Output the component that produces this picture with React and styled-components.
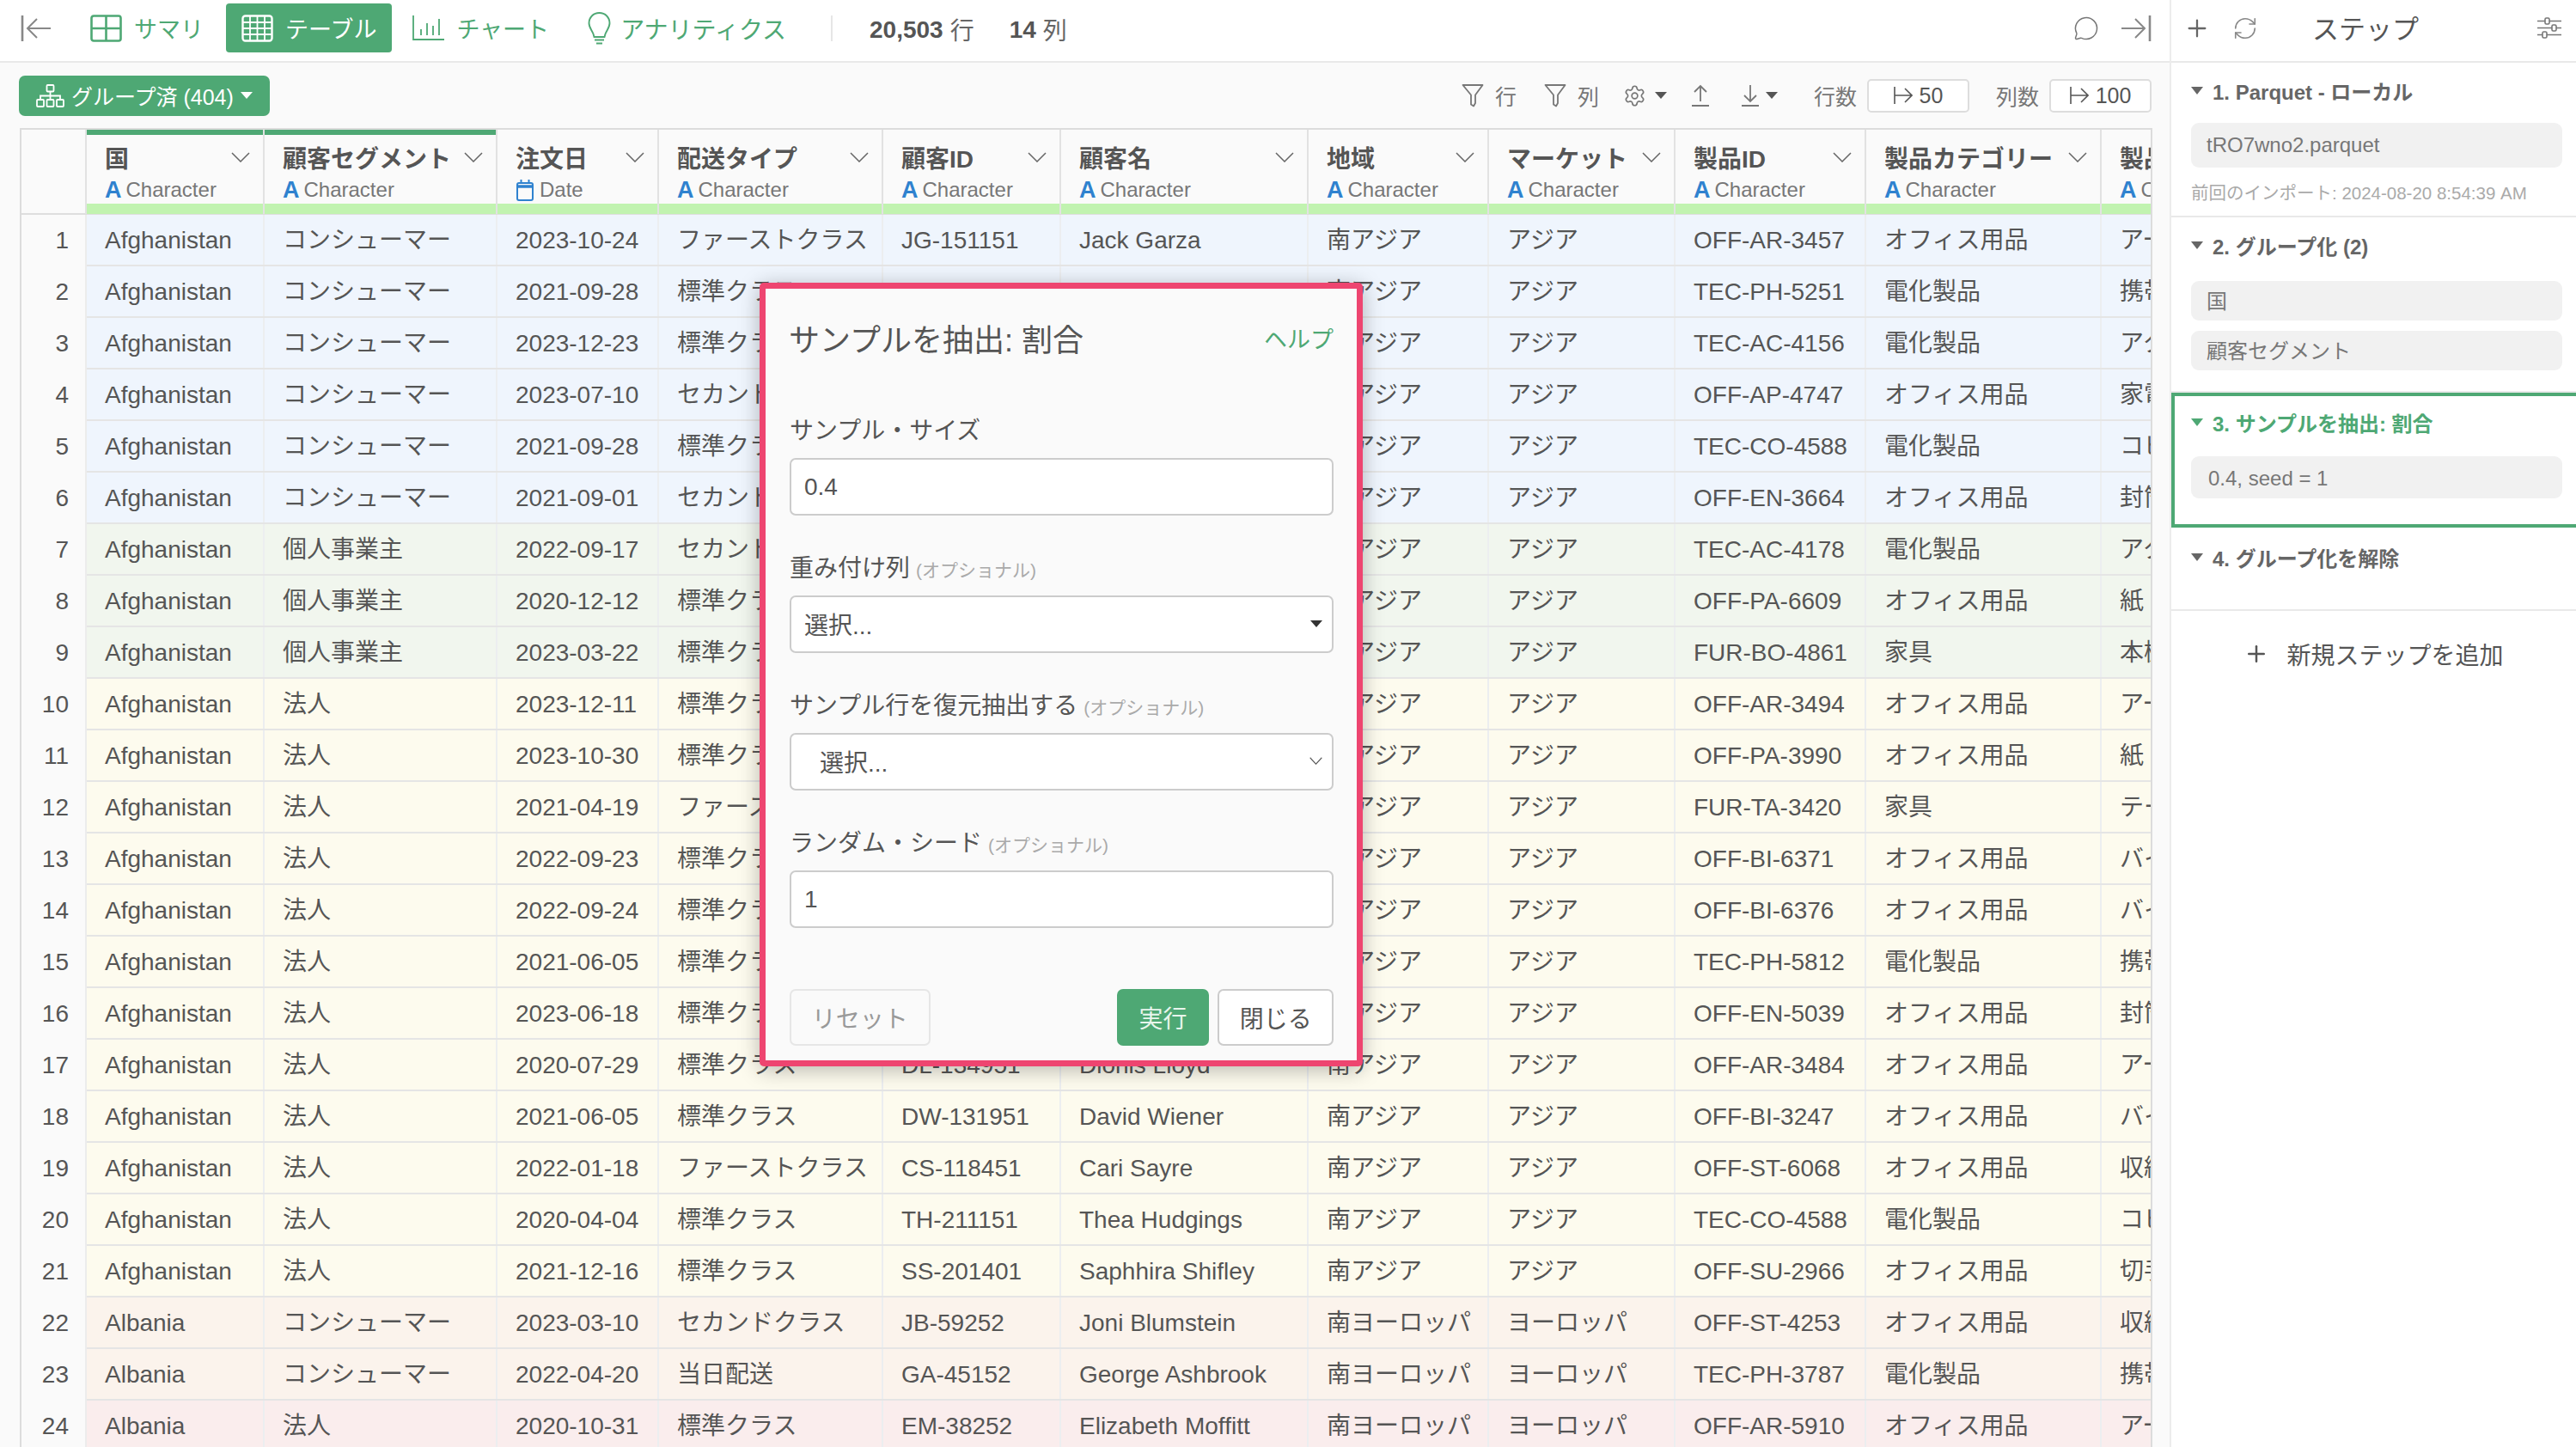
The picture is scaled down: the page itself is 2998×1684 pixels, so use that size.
import React from 'react';
import styled, { createGlobalStyle } from 'styled-components';
import { MessageCircle, RefreshCw, Settings, Plus } from 'lucide-react';

const GREEN = '#4ea874';
const FONT = `"Liberation Sans", "Noto Sans CJK JP", sans-serif`;

const Global = createGlobalStyle`
  html, body { margin: 0; padding: 0; background: #fff; overflow: hidden; }
  body { font-family: ${FONT}; color: #555; }
  * { box-sizing: border-box; }
`;

const Page = styled.div`display: flex; width: 2998px; height: 1684px; overflow: hidden;`;
const Main = styled.main`position: relative; width: 2525px; flex: none; background: #fafafa; display: flex; flex-direction: column;`;
const TopBar = styled.header`
  height: 73px; flex: none; display: flex; align-items: center; background: #fff;
  border-bottom: 2px solid #e9e9e9; padding: 0 21px 6px 24px;
`;
const Tabs = styled.nav`display: flex; align-items: center; margin-left: 27px;`;
const Tab = styled.div`
  height: 57px; display: flex; align-items: center; gap: ${p => p.$gap || 14}px; padding: 0 18px; border-radius: 4px;
  font-size: ${p => p.$fs || 27}px; margin-left: ${p => p.$ml || 0}px;
  color: ${p => (p.$active ? '#fff' : GREEN)};
  background: ${p => (p.$active ? GREEN : 'transparent')};
`;
const Divider = styled.span`width: 2px; height: 30px; background: #e6e6e6; margin-left: 34px;`;
const Stat = styled.span`font-size: 28px; color: #666; margin-left: ${p => p.$ml}px; margin-top: 2px; display: inline-flex; align-items: center; gap: 8px;`;
const StatNum = styled.b`color: #555; line-height: 34px; padding-top: 2px;`;
const TopRight = styled.div`margin-left: auto; display: flex; align-items: center; gap: 25px;`;

const Toolbar = styled.div`height: 76px; flex: none; display: flex; align-items: center; padding: 0 21px 0 22px;`;
const GroupButton = styled.div`
  width: 292px; height: 47px; background: ${GREEN}; border-radius: 7px; color: #fff; font-size: 25px;
  display: flex; align-items: center; padding-left: 20px; gap: 8px; white-space: nowrap;
`;
const ToolRight = styled.div`margin-left: auto; display: flex; align-items: center; color: #777; font-size: 25px;`;
const ToolItem = styled.div`display: flex; align-items: center; gap: ${p => p.$gap || 12}px; margin-left: ${p => p.$ml || 0}px;`;
const Caret = styled.i`
  display: inline-block; width: 0; height: 0; flex: none;
  border-left: ${p => p.$w / 2}px solid transparent; border-right: ${p => p.$w / 2}px solid transparent;
  border-top: ${p => p.$h}px solid ${p => p.$c || '#555'};
`;
const CountBox = styled.div`
  width: 119px; height: 39px; background: #fff; border: 2px solid #ddd; border-radius: 5px;
  display: flex; align-items: center; justify-content: center; gap: 8px; font-size: 25px; color: #555;
`;

const TableWrap = styled.div`width: 2482px; margin-left: 23px; flex: 1; overflow: hidden; border: 2px solid #dcdcdc; border-bottom: 0; background: #fff;`;
const COLS = '76px 207px 271px 188px 261px 207px 288px 210px 217px 222px 274px 220px';
const HeadRow = styled.div`display: grid; grid-template-columns: ${COLS}; height: 99px; border-bottom: 2px solid #dedede; background: #fafafa;`;
const NumHead = styled.div`border-right: 2px solid #e2e2e2;`;
const HeadCell = styled.div`display: flex; flex-direction: column; border-right: 2px solid #e2e2e2; min-width: 0;`;
const GroupBar = styled.div`height: 6px; flex: none; background: ${p => (p.$on ? GREEN : 'transparent')};`;
const HeadBody = styled.div`flex: 1; padding: 9px 15px 0 21px; min-width: 0;`;
const Strip = styled.div`height: 12px; flex: none; background: #c1f3b0;`;
const TitleLine = styled.div`display: flex; justify-content: space-between; align-items: center; height: 34px; font-size: 28px; font-weight: 700; color: #555; white-space: nowrap;`;
const TypeLine = styled.div`display: flex; align-items: center; gap: 5px; height: 32px; margin-top: 5px; font-size: 24px; color: #777; white-space: nowrap;`;
const TypeA = styled.b`font-size: 27px; color: #2f82cf;`;
const DateIconWrap = styled.span`display: inline-flex; margin-left: 1px; margin-right: 2px;`;

const Row = styled.div`display: grid; grid-template-columns: ${COLS}; height: 60px; border-bottom: 2px solid #e5e5e5; background: ${p => p.$bg};`;
const NumCell = styled.div`background: #fafafa; border-right: 2px solid #ececec; font-size: 28px; color: #555; line-height: 60px; text-align: right; padding-right: 19px;`;
const Cell = styled.div`border-right: 2px solid #eceef0; font-size: 28px; color: #555; line-height: 60px; height: 58px; padding-left: 21px; white-space: nowrap; overflow: hidden;`;

const Modal = styled.section`
  position: absolute; left: 884px; top: 329px; width: 702px; height: 912px; background: #fafafa;
  border: 7px solid #ee4570; border-radius: 5px; box-shadow: 0 4px 24px rgba(0,0,0,.28);
  padding: 32px 27px 0 28px; display: flex; flex-direction: column;
`;
const ModalHead = styled.div`display: flex; justify-content: space-between; align-items: center; height: 50px;`;
const ModalTitle = styled.h2`margin: 0 0 0 -1px; font-size: 36px; font-weight: 400; color: #555;`;
const HelpLink = styled.a`font-size: 27px; color: ${GREEN};`;
const Field = styled.div`margin-top: ${p => p.$mt || 41}px;`;
const Label = styled.label`display: block; height: 40px; line-height: 42px; font-size: 28px; color: #555; margin-bottom: 12px; white-space: nowrap;`;
const Optional = styled.span`font-size: 21px; color: #aaa; margin-left: 7px;`;
const TextInput = styled.input`
  display: block; width: 100%; height: 67px; border: 2px solid #ccc; border-radius: 7px; background: #fff;
  font: 28px ${FONT}; color: #555; padding: 0 15px; outline: none;
`;
const SelectBox = styled.div`
  display: flex; align-items: center; justify-content: space-between; width: 100%; height: 67px; border: 2px solid #ccc;
  border-radius: 7px; background: #fff; font-size: 28px; color: #555; padding: 0 11px 2px ${p => p.$pl}px;
`;
const ButtonRow = styled.div`display: flex; align-items: center; margin-top: 71px; gap: 10px;`;
const Btn = styled.div`
  height: 66px; width: ${p => p.$w}px; display: flex; align-items: center; justify-content: center; font-size: 28px; border-radius: 7px;
  margin-right: ${p => p.$mr || 0}px;
  color: ${p => p.$c}; background: ${p => p.$bg}; border: 2px solid ${p => p.$bd};
`;

const Side = styled.aside`width: 473px; flex: none; background: #fff; border-left: 2px solid #ececec; display: flex; flex-direction: column;`;
const SideHead = styled.div`height: 73px; flex: none; display: flex; align-items: center; border-bottom: 2px solid #e9e9e9; padding: 0 17px 6px 14px; color: #666;`;
const SideTitle = styled.div`font-size: 31px; color: #555; margin-left: 63px; margin-top: -2px;`;
const Spacer = styled.span`flex: 1;`;
const Step = styled.div`border-bottom: 2px solid #e9e9e9; padding: ${p => p.$pt}px 16px ${p => p.$pb}px 23px;`;
const ActiveStep = styled.div`border: 4px solid ${GREEN}; border-right: 0; padding: 17px 16px 30px 19px;`;
const StepTitle = styled.div`
  display: flex; align-items: center; gap: 11px; height: 30px; padding-bottom: 4px; font-size: 24px; font-weight: 700; white-space: nowrap;
  color: ${p => (p.$on ? GREEN : '#666')};
`;
const StepCard = styled.div`
  height: ${p => p.$h}px; margin-top: ${p => p.$mt}px; background: #f1f1f1; border-radius: 9px;
  padding: ${p => p.$tp || 0}px 0 ${p => p.$bp || 0}px ${p => p.$pl || 18}px;
  font-size: 24px; color: #777; display: flex; align-items: center;
`;
const StepMeta = styled.div`height: 24px; line-height: 24px; margin-top: 18px; font-size: 20.5px; color: #aaa; white-space: nowrap;`;
const AddStep = styled.div`height: 103px; display: flex; align-items: center; justify-content: center; gap: 20px; font-size: 28px; color: #555; padding-bottom: 3px;`;

const Svg = styled.svg`display: block; flex: none; transform: ${p => (p.$flip ? 'scaleX(-1)' : 'none')};`;

const BackIcon = ({ flip }) => (
  <Svg $flip={flip} width="36" height="30" viewBox="0 0 36 30" fill="none" stroke="#888" strokeWidth="2">
    <path d="M2 0v30" strokeWidth="2.6" /><path d="M35 15H8M19 4 8 15l11 11" />
  </Svg>
);
const GridIcon = () => (
  <Svg width="37" height="32" viewBox="0 0 37 32" fill="none" stroke={GREEN} strokeWidth="2.6">
    <rect x="1.5" y="1.5" width="34" height="29" rx="2.5" /><path d="M18.5 1.5v29M1.5 16h34" />
  </Svg>
);
const TableIcon = () => (
  <Svg width="37" height="32" viewBox="0 0 37 32" fill="none" stroke="#fff" strokeWidth="2.4">
    <rect x="1.5" y="1.5" width="34" height="29" rx="3" />
    <path d="M10 1.5v29M18.5 1.5v29M27 1.5v29M1.5 9h34M1.5 16h34M1.5 23h34" strokeWidth="1.8" />
  </Svg>
);
const ChartIcon = () => (
  <Svg width="37" height="29" viewBox="0 0 37 29" fill="none" stroke={GREEN} strokeWidth="1.8">
    <path d="M1 0v28h36M10 16v7M17 9v14M24 12v11M31 4v19" />
  </Svg>
);
const BulbIcon = () => (
  <Svg width="27" height="38" viewBox="0 0 27 38" fill="none" stroke={GREEN} strokeWidth="1.9">
    <path d="M13.5 1C6.5 1 1.5 6.3 1.5 13c0 5 3.2 8 5 12.5l1 3.5h12l1-3.5c1.8-4.5 5-7.5 5-12.5C25.5 6.3 20.5 1 13.5 1z" />
    <path d="M8 32.5h11M10 36.5h7" />
  </Svg>
);
const SitemapIcon = () => (
  <Svg width="33" height="27" viewBox="0 0 33 27" fill="none" stroke="#fff" strokeWidth="1.8">
    <rect x="12.5" y="1" width="8" height="7.5" rx="1" />
    <path d="M16.5 8.5v5M5 18v-4.5h23V18M16.5 13.5V18" />
    <rect x="1" y="18" width="8" height="8" rx="1" /><rect x="12.5" y="18" width="8" height="8" rx="1" /><rect x="24" y="18" width="8" height="8" rx="1" />
  </Svg>
);
const FilterIcon = () => (
  <Svg width="26" height="28" viewBox="0 0 26 28" fill="none" stroke="#777" strokeWidth="1.8" strokeLinejoin="round">
    <path d="M1.5 2h23L16 13.5V23l-2 3.5-3-2V13.5z" />
  </Svg>
);
const ArrowBar = ({ up }) => (
  <Svg width="20" height="26" viewBox="0 0 20 26" fill="none" stroke="#777" strokeWidth="1.8">
    {up ? <path d="M10 20V2M3 9l7-7 7 7M0 25h20" /> : <path d="M10 1v19M3 13l7 7 7-7M0 25h20" />}
  </Svg>
);
const LimitIcon = () => (
  <Svg width="22" height="24" viewBox="0 0 22 24" fill="none" stroke="#555" strokeWidth="1.6">
    <path d="M1 2v20M1 12h20M13 4l8 8-8 8" />
  </Svg>
);
const Chevron = ({ w = 22, h = 12, c = '#666' }) => (
  <Svg width={w} height={h} viewBox="0 0 22 12" fill="none" stroke={c} strokeWidth="1.5" preserveAspectRatio="none">
    <path d="M1 1l10 10L21 1" />
  </Svg>
);
const CalendarIcon = () => (
  <Svg width="20" height="25" viewBox="0 0 20 25" fill="none" stroke="#2f82cf" strokeWidth="2">
    <rect x="1" y="4" width="18" height="20" rx="2" /><path d="M1 8h18" strokeWidth="3.5" /><path d="M5.5 0v5M14.5 0v5" />
  </Svg>
);
const SlidersIcon = () => (
  <Svg width="28" height="25" viewBox="0 0 28 25" fill="none" stroke="#777" strokeWidth="1.6">
    <path d="M0 4.5h28M0 12.5h28M0 20.5h28" />
    <rect x="9" y="1" width="5" height="7" rx="1.5" fill="#fff" /><rect x="17" y="9" width="5" height="7" rx="1.5" fill="#fff" /><rect x="6" y="17" width="5" height="7" rx="1.5" fill="#fff" />
  </Svg>
);

const HEADERS = [
  ['国', 'Character', true], ['顧客セグメント', 'Character', true], ['注文日', 'Date'], ['配送タイプ', 'Character'],
  ['顧客ID', 'Character'], ['顧客名', 'Character'], ['地域', 'Character'], ['マーケット', 'Character'],
  ['製品ID', 'Character'], ['製品カテゴリー', 'Character'], ['製品名', 'Character'],
];

const BG = { b: '#eff5fd', g: '#f1f6ee', y: '#fdfbee', o: '#fbf3ec', p: '#faeded' };
const AF = 'Afghanistan', AL = 'Albania', CO = 'コンシューマー', SO = '個人事業主', HO = '法人';
const FC = 'ファーストクラス', ST = '標準クラス', SC = 'セカンドクラス';
const SA = '南アジア', AS = 'アジア', OF = 'オフィス用品', EL = '電化製品', FU = '家具';
const ROWS = [
  ['b', AF, CO, '2023-10-24', FC, 'JG-151151', 'Jack Garza', SA, AS, 'OFF-AR-3457', OF, 'アート'],
  ['b', AF, CO, '2021-09-28', ST, 'JG-151152', 'Jack Garza', SA, AS, 'TEC-PH-5251', EL, '携帯電話'],
  ['b', AF, CO, '2023-12-23', ST, 'JG-151153', 'Jack Garza', SA, AS, 'TEC-AC-4156', EL, 'アクセサリ'],
  ['b', AF, CO, '2023-07-10', SC, 'JG-151154', 'Jack Garza', SA, AS, 'OFF-AP-4747', OF, '家電'],
  ['b', AF, CO, '2021-09-28', ST, 'JG-151155', 'Jack Garza', SA, AS, 'TEC-CO-4588', EL, 'コピー機'],
  ['b', AF, CO, '2021-09-01', SC, 'JG-151156', 'Jack Garza', SA, AS, 'OFF-EN-3664', OF, '封筒'],
  ['g', AF, SO, '2022-09-17', SC, 'JG-151157', 'Jack Garza', SA, AS, 'TEC-AC-4178', EL, 'アクセサリ'],
  ['g', AF, SO, '2020-12-12', ST, 'JG-151158', 'Jack Garza', SA, AS, 'OFF-PA-6609', OF, '紙'],
  ['g', AF, SO, '2023-03-22', ST, 'JG-151159', 'Jack Garza', SA, AS, 'FUR-BO-4861', FU, '本棚'],
  ['y', AF, HO, '2023-12-11', ST, 'DL-134951', 'Dionis Lloyd', SA, AS, 'OFF-AR-3494', OF, 'アート'],
  ['y', AF, HO, '2023-10-30', ST, 'DL-134952', 'Dionis Lloyd', SA, AS, 'OFF-PA-3990', OF, '紙'],
  ['y', AF, HO, '2021-04-19', FC, 'DL-134953', 'Dionis Lloyd', SA, AS, 'FUR-TA-3420', FU, 'テーブル'],
  ['y', AF, HO, '2022-09-23', ST, 'DL-134954', 'Dionis Lloyd', SA, AS, 'OFF-BI-6371', OF, 'バインダー'],
  ['y', AF, HO, '2022-09-24', ST, 'DL-134955', 'Dionis Lloyd', SA, AS, 'OFF-BI-6376', OF, 'バインダー'],
  ['y', AF, HO, '2021-06-05', ST, 'DL-134956', 'Dionis Lloyd', SA, AS, 'TEC-PH-5812', EL, '携帯電話'],
  ['y', AF, HO, '2023-06-18', ST, 'DL-134957', 'Dionis Lloyd', SA, AS, 'OFF-EN-5039', OF, '封筒'],
  ['y', AF, HO, '2020-07-29', ST, 'DL-134951', 'Dionis Lloyd', SA, AS, 'OFF-AR-3484', OF, 'アート'],
  ['y', AF, HO, '2021-06-05', ST, 'DW-131951', 'David Wiener', SA, AS, 'OFF-BI-3247', OF, 'バインダー'],
  ['y', AF, HO, '2022-01-18', FC, 'CS-118451', 'Cari Sayre', SA, AS, 'OFF-ST-6068', OF, '収納'],
  ['y', AF, HO, '2020-04-04', ST, 'TH-211151', 'Thea Hudgings', SA, AS, 'TEC-CO-4588', EL, 'コピー機'],
  ['y', AF, HO, '2021-12-16', ST, 'SS-201401', 'Saphhira Shifley', SA, AS, 'OFF-SU-2966', OF, '切手'],
  ['o', AL, CO, '2023-03-10', SC, 'JB-59252', 'Joni Blumstein', '南ヨーロッパ', 'ヨーロッパ', 'OFF-ST-4253', OF, '収納'],
  ['o', AL, CO, '2022-04-20', '当日配送', 'GA-45152', 'George Ashbrook', '南ヨーロッパ', 'ヨーロッパ', 'TEC-PH-3787', EL, '携帯電話'],
  ['p', AL, HO, '2020-10-31', ST, 'EM-38252', 'Elizabeth Moffitt', '南ヨーロッパ', 'ヨーロッパ', 'OFF-AR-5910', OF, 'アート'],
];

export default function App() {
  return (
    <Page>
      <Global />
      <Main>
        <TopBar>
          <BackIcon />
          <Tabs>
            <Tab><GridIcon />サマリ</Tab>
            <Tab $active $ml={8}><TableIcon />テーブル</Tab>
            <Tab $ml={6}><ChartIcon />チャート</Tab>
            <Tab $ml={9} $gap={11} $fs={28}><BulbIcon />アナリティクス</Tab>
          </Tabs>
          <Divider />
          <Stat $ml={43}><StatNum>20,503</StatNum>行</Stat>
          <Stat $ml={41}><StatNum>14</StatNum>列</Stat>
          <TopRight>
            <MessageCircle size={30} strokeWidth={1.2} color="#777" />
            <BackIcon flip />
          </TopRight>
        </TopBar>
        <Toolbar>
          <GroupButton><SitemapIcon />グループ済 (404)<Caret $w={14} $h={8} $c="#fff" /></GroupButton>
          <ToolRight>
            <ToolItem $gap={13}><FilterIcon />行</ToolItem>
            <ToolItem $gap={13} $ml={32}><FilterIcon />列</ToolItem>
            <ToolItem $gap={10} $ml={28}><Settings size={27} strokeWidth={1.5} color="#777" /><Caret $w={14} $h={8} /></ToolItem>
            <ToolItem $ml={29}><ArrowBar up /></ToolItem>
            <ToolItem $gap={8} $ml={38}><ArrowBar /><Caret $w={14} $h={8} /></ToolItem>
            <ToolItem $ml={42}>行数<CountBox><LimitIcon />50</CountBox></ToolItem>
            <ToolItem $ml={31}>列数<CountBox><LimitIcon />100</CountBox></ToolItem>
          </ToolRight>
        </Toolbar>
        <TableWrap>
          <HeadRow>
            <NumHead />
            {HEADERS.map(([title, type, grouped]) => (
              <HeadCell key={title}>
                <GroupBar $on={grouped} />
                <HeadBody>
                  <TitleLine>{title}<Chevron /></TitleLine>
                  <TypeLine>
                    {type === 'Date' ? <DateIconWrap><CalendarIcon /></DateIconWrap> : <TypeA>A</TypeA>}
                    {type}
                  </TypeLine>
                </HeadBody>
                <Strip />
              </HeadCell>
            ))}
          </HeadRow>
          {ROWS.map(([g, ...cells], i) => (
            <Row key={i} $bg={BG[g]}>
              <NumCell>{i + 1}</NumCell>
              {cells.map((c, j) => <Cell key={j}>{c}</Cell>)}
            </Row>
          ))}
        </TableWrap>
        <Modal>
          <ModalHead>
            <ModalTitle>サンプルを抽出: 割合</ModalTitle>
            <HelpLink>ヘルプ</HelpLink>
          </ModalHead>
          <Field $mt={63}>
            <Label>サンプル・サイズ</Label>
            <TextInput readOnly value="0.4" />
          </Field>
          <Field>
            <Label>重み付け列<Optional>(オプショナル)</Optional></Label>
            <SelectBox $pl={15}>選択...<Caret $w={14} $h={8} $c="#333" /></SelectBox>
          </Field>
          <Field>
            <Label>サンプル行を復元抽出する<Optional>(オプショナル)</Optional></Label>
            <SelectBox $pl={33}>選択...<Chevron w={15} h={9} c="#555" /></SelectBox>
          </Field>
          <Field>
            <Label>ランダム・シード<Optional>(オプショナル)</Optional></Label>
            <TextInput readOnly value="1" />
          </Field>
          <ButtonRow>
            <Btn $w={164} $mr={207} $c="#999" $bg="#fafafa" $bd="#e6e6e6">リセット</Btn>
            <Btn $w={108} $c="#e8f5ec" $bg={GREEN} $bd={GREEN}>実行</Btn>
            <Btn $w={135} $c="#555" $bg="#fff" $bd="#ccc">閉じる</Btn>
          </ButtonRow>
        </Modal>
      </Main>
      <Side>
        <SideHead>
          <Plus size={32} strokeWidth={1.7} color="#666" />
          <RefreshCw size={30} strokeWidth={1.3} color="#888" style={{ marginLeft: 25 }} />
          <SideTitle>ステップ</SideTitle>
          <Spacer />
          <SlidersIcon />
        </SideHead>
        <Step $pt={19} $pb={14}>
          <StepTitle><Caret $w={14} $h={9} $c="#666" />1. Parquet - ローカル</StepTitle>
          <StepCard $h={52} $mt={21}>tRO7wno2.parquet</StepCard>
          <StepMeta>前回のインポート: 2024-08-20 8:54:39 AM</StepMeta>
        </Step>
        <Step $pt={19} $pb={24}>
          <StepTitle><Caret $w={14} $h={9} $c="#666" />2. グループ化 (2)</StepTitle>
          <StepCard $h={46} $mt={25} $bp={3}>国</StepCard>
          <StepCard $h={46} $mt={12} $bp={3}>顧客セグメント</StepCard>
        </Step>
        <ActiveStep>
          <StepTitle $on><Caret $w={14} $h={9} $c={GREEN} />3. サンプルを抽出: 割合</StepTitle>
          <StepCard $h={49} $mt={23} $pl={20} $tp={2}>0.4, seed = 1</StepCard>
        </ActiveStep>
        <Step $pt={21} $pb={44}>
          <StepTitle><Caret $w={14} $h={9} $c="#666" />4. グループ化を解除</StepTitle>
        </Step>
        <AddStep><Plus size={30} strokeWidth={2} color="#555" />新規ステップを追加</AddStep>
      </Side>
    </Page>
  );
}
